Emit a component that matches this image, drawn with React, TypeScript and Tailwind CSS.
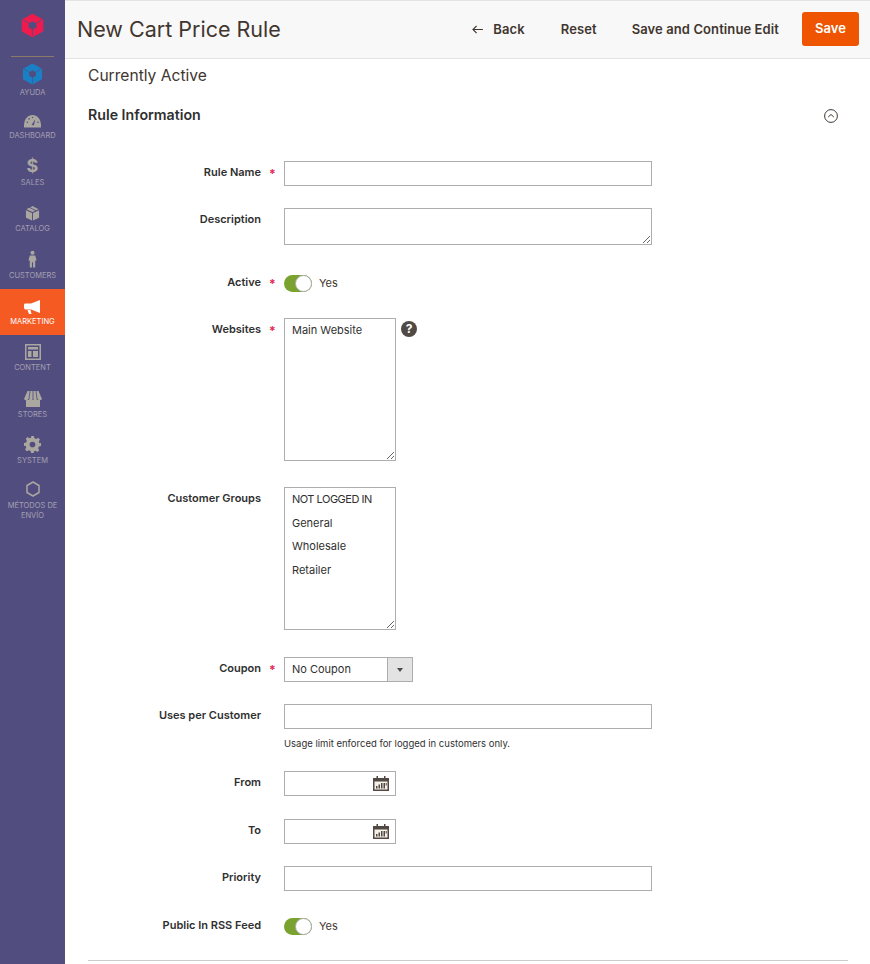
import React from 'react';

const Cube: React.FC<{ fill: string; hole: string; className?: string }> = ({ fill, hole, className }) => (
  <svg viewBox="0 0 24 26" className={className}>
    <path d="M12 2 L22 7.500 V18.500 L12 24 L2 18.500 V7.500 Z" fill={fill} stroke={fill} strokeWidth="2.500" strokeLinejoin="round" />
    <path d="M2 7 L12 13 L22 7 M12 13 V24" fill="none" stroke={hole} strokeWidth="0.8" />
    <path d="M12 8.500 L16 11 V15 L12 17.500 L8 15 V11 Z" fill={hole} />
  </svg>
);

const Gauge = () => (
  <svg viewBox="0 0 20 15" className="w-[17px] h-[14px]" fill="#aaa6a0">
    <path d="M0 15 C-0.5 6 4 0.5 10 0.5 C16 0.5 20.500 6 20 15 Z" />
    <path d="M9 12 L13.500 5 L11.500 12.800 Z" fill="#524d7f" />
    <circle cx="4" cy="9" r="0.9" fill="#524d7f" />
    <circle cx="6" cy="5" r="0.9" fill="#524d7f" />
    <circle cx="10" cy="3.500" r="0.9" fill="#524d7f" />
    <circle cx="16.500" cy="9" r="0.9" fill="#524d7f" />
  </svg>
);

const Box = () => (
  <svg viewBox="0 0 16 16" className="w-[15px] h-[16px]" fill="#aaa6a0">
    <path d="M1 5 L7.500 8 V16 L1 13 Z" />
    <path d="M15 5 L8.500 8 V16 L15 13 Z" />
    <path d="M8 7 L1.500 4 L4.500 2.500 L11 5.500 Z" />
    <path d="M12 5 L5.500 2 L8 0.500 L14.500 4 Z" />
  </svg>
);

const Person = () => (
  <svg viewBox="0 0 10 19" className="w-[9px] h-[18px]" fill="#aaa6a0">
    <circle cx="5" cy="2.500" r="2.300" />
    <path d="M2 5.500 H8 L9.500 11 L8 11.500 V19 H5.600 V13 H4.400 V19 H2 V11.500 L0.500 11 Z" />
  </svg>
);

const Megaphone = () => (
  <svg viewBox="0 0 17 14" className="w-[17px] h-[14px]" fill="#ffffff">
    <path d="M16 0 V13 L7 9.500 H1.500 C0.500 9.500 0 8.500 0 7 V5.500 C0 4 0.500 3.500 1.500 3.500 H7 Z" />
    <path d="M3.500 10 H6.500 L7.500 14 H5 Z" />
  </svg>
);

const Content = () => (
  <svg viewBox="0 0 16 16" className="w-[16px] h-[16px]" fill="#aaa6a0">
    <path fillRule="evenodd" d="M0 0 H16 V16 H0 Z M1.500 1.500 V14.500 H14.500 V1.500 Z" />
    <path d="M3 3 H13 V5.500 H3 Z M3 7 H6.500 V13 H3 Z M8 7 H13 V13 H8 Z" />
  </svg>
);

const Store = () => (
  <svg viewBox="0 0 18 16" className="w-[18px] h-[16px]" fill="#aaa6a0">
    <path d="M3.500 0 H14.500 L18 8 H0 Z" />
    <path d="M2 9 H16 V16 H2 Z" />
    <path d="M6 0 L5 8 M9 0 V8 M12 0 L13 8" stroke="#524d7f" strokeWidth="0.8" />
    <path d="M0 8 Q2 10.500 4.500 8 Q7 10.500 9 8 Q11 10.500 13.500 8 Q16 10.500 18 8" fill="#aaa6a0" />
  </svg>
);

const Gear = () => (
  <svg viewBox="0 0 24 24" className="w-[17px] h-[17px]">
    <path
      fill="#aaa6a0"
      d="M10 0 H14 L14.700 3.200 L17.200 4.200 L20 2.500 L22.500 5 L20.800 7.800 L21.800 10.300 L24 10 V14 L21 14.700 L20 17.200 L21.500 20 L19 22.500 L16.200 20.800 L13.700 21.800 L14 24 H10 L9.300 21 L6.800 20 L4 21.500 L1.500 19 L3.200 16.200 L2.200 13.700 L0 14 V10 L3 9.300 L4 6.800 L2.500 4 L5 1.500 L7.800 3.200 L10.300 2.200 Z"
    />
    <circle cx="12" cy="12" r="4" fill="#524d7f" />
  </svg>
);

const Hexagon = () => (
  <svg viewBox="0 0 14 16" className="w-[14px] h-[16px]" fill="none" stroke="#aaa6a0" strokeWidth="1.500" strokeLinejoin="round">
    <path d="M7 1 L13 4.500 V11.500 L7 15 L1 11.500 V4.500 Z" />
  </svg>
);

const Calendar = () => (
  <svg viewBox="0 0 16 15" className="w-[16px] h-[15px]">
    <path d="M0 2 H16 V15 H0 Z" fill="#514943" />
    <path d="M1.500 5.500 H14.500 V13.500 H1.500 Z" fill="#f4f1e8" />
    <path d="M3.500 0 H5 V3.500 H3.500 Z M11 0 H12.500 V3.500 H11 Z" fill="#514943" />
    <path d="M3 10 H4.500 V12.500 H3 Z M5.500 8.500 H7 V12.500 H5.500 Z M8 7 H9.500 V12.500 H8 Z M10.500 7 H12 V12.500 H10.500 Z M12.700 7 H13.700 V9.500 H12.700 Z" fill="#514943" />
  </svg>
);

const NavItem: React.FC<{ label: React.ReactNode; icon: React.ReactNode; active?: boolean; labelClass?: string }> = ({ label, icon, active, labelClass = '' }) => (
  <div className={`flex flex-col items-center h-[46.4px] shrink-0 ${active ? 'bg-[#f65a23] text-white' : 'text-[#a3a0b2]'}`}>
    <div className="h-[28px] flex items-end justify-center pb-[3px]">{icon}</div>
    <div className={`text-[7.5px] leading-[10px] uppercase text-center ${labelClass}`}>{label}</div>
  </div>
);

const Row: React.FC<{ label: string; required?: boolean; className?: string; labelClass?: string; children: React.ReactNode }> = ({
  label,
  required,
  className = '',
  labelClass = 'pt-[4px]',
  children,
}) => (
  <div className={`flex ${className}`}>
    <div className={`w-[173px] shrink-0 text-right text-[11px] leading-[14px] font-semibold text-[#303030] ${labelClass}`}>{label}</div>
    <div className={`w-[23px] shrink-0 pl-[8px] mt-[2px] text-[12px] leading-[14px] font-bold text-[#e22650] ${labelClass}`}>{required ? '*' : ''}</div>
    {children}
  </div>
);

const Toggle = () => (
  <div className="flex items-center gap-[7px]">
    <div className="w-[28px] h-[17px] rounded-full bg-[#79a22e] relative">
      <div className="absolute right-0 top-0 w-[17px] h-[17px] rounded-full bg-white border border-[#adadad]" />
    </div>
    <span className="text-[11px] text-[#41362f]">Yes</span>
  </div>
);

const inputClass = 'h-[25px] border border-[#adadad] bg-white block';

const ListBox: React.FC<{ items: string[] }> = ({ items }) => (
  <div className="w-[112px] h-[143px] border border-[#adadad] bg-white pl-[7px] pt-[1px] resize overflow-auto text-[11px] text-[#303030]">
    {items.map((item) => (
      <div key={item} className={`h-[23.6px] leading-[21px] ${item === 'NOT LOGGED IN' ? 'tracking-[-0.5px]' : ''}`}>{item}</div>
    ))}
  </div>
);

const DateInput = () => (
  <div className={`${inputClass} w-[112px] flex items-center justify-end pr-[6px]`}>
    <Calendar />
  </div>
);

export default function App() {
  return (
    <div className="flex w-[870px] h-[964px] overflow-hidden bg-white" style={{ fontFamily: 'Inter, "Open Sans", sans-serif' }}>
      <aside className="w-[65px] shrink-0 bg-[#524d7f] flex flex-col">
        <div className="h-[56px] flex justify-center pt-[13px] shrink-0">
          <Cube className="w-[23px] h-[25px]" fill="#ee1c4e" hole="#524d7f" />
        </div>
        <div className="mx-[11px] h-px bg-[#8a7a68] shrink-0" />
        <div className="h-[46.400px] shrink-0 flex flex-col items-center pt-[6px]">
          <Cube className="w-[21px] h-[22px]" fill="#1a80c6" hole="#524d7f" />
          <div className="text-[7.5px] leading-[10px] uppercase text-[#a3a0b2] mt-[3px]">Ayuda</div>
        </div>
        <NavItem label="Dashboard" icon={<Gauge />} />
        <NavItem label="Sales" icon={<span className="text-[18px] leading-[18px] font-bold text-[#aaa6a0]">$</span>} />
        <NavItem label="Catalog" icon={<Box />} />
        <NavItem label="Customers" icon={<Person />} />
        <NavItem label="Marketing" icon={<Megaphone />} active />
        <NavItem label="Content" icon={<Content />} />
        <NavItem label="Stores" icon={<Store />} />
        <NavItem label="System" icon={<Gear />} />
        <NavItem label={<>Métodos de<br />Envío</>} icon={<Hexagon />} labelClass="mt-[1px]" />
      </aside>

      <main className="flex-1 min-w-0">
        <header className="h-[59px] bg-[#f8f8f8] border-t border-b border-[#e3e3e3] flex items-center pl-[12px] pr-[11px]">
          <h1 className="text-[21.5px] font-normal text-[#41362f]">New Cart Price Rule</h1>
          <div className="ml-auto flex items-center text-[13px] tracking-[0.1px] font-semibold text-[#41362f]">
            <svg viewBox="0 0 12 10" className="w-[11px] h-[9px]" fill="none" stroke="#41362f" strokeWidth="1.300">
              <path d="M12 5 H1 M5 1 L1 5 L5 9" />
            </svg>
            <span className="ml-[10px]">Back</span>
            <span className="ml-[36px]">Reset</span>
            <span className="ml-[35px]">Save and Continue Edit</span>
            <button className="ml-[23px] mb-[1px] w-[57px] h-[34px] rounded-[3px] bg-[#ef5500] text-white font-semibold">Save</button>
          </div>
        </header>

        <div className="pl-[23px] pr-[22px]">
          <div className="mt-[6px] text-[15.6px] leading-[22px] text-[#41362f]">Currently Active</div>
          <div className="mt-[17px] flex items-center justify-between pr-[10px]">
            <h2 className="text-[14.200px] leading-[22px] font-semibold text-[#303030]">Rule Information</h2>
            <svg viewBox="0 0 14 14" className="w-[14px] h-[14px] translate-y-px" fill="none" stroke="#41362f" strokeWidth="1">
              <circle cx="7" cy="7" r="6.400" />
              <path d="M4.200 8 L7 5.500 L9.800 8" />
            </svg>
          </div>

          <div className="mt-[35px]">
            <Row label="Rule Name" required>
              <div className={`${inputClass} w-[368px]`} />
            </Row>
            <Row label="Description" className="mt-[22px]">
              <textarea className="w-[368px] h-[37px] border border-[#adadad] bg-white block" />
            </Row>
            <Row label="Active" required className="mt-[30px]" labelClass="pt-0">
              <Toggle />
            </Row>
            <Row label="Websites" required className="mt-[26px]">
              <ListBox items={['Main Website']} />
              <div className="ml-[5px] mt-[3px] w-[16px] h-[16px] rounded-full bg-[#514943] text-white text-[12px] leading-[16px] font-bold text-center">?</div>
            </Row>
            <Row label="Customer Groups" className="mt-[26px]">
              <ListBox items={['NOT LOGGED IN', 'General', 'Wholesale', 'Retailer']} />
            </Row>
            <Row label="Coupon" required className="mt-[27px]">
              <div className={`${inputClass} w-[129px] flex text-[11px] text-[#303030]`}>
                <span className="flex-1 pl-[7px] leading-[23px]">No Coupon</span>
                <span className="w-[25px] bg-[#e3e3e3] border-l border-[#adadad] flex items-center justify-center">
                  <span className="w-0 h-0 border-l-[3.500px] border-r-[3.500px] border-t-[4px] border-l-transparent border-r-transparent border-t-[#514943]" />
                </span>
              </div>
            </Row>
            <Row label="Uses per Customer" className="mt-[22px]">
              <div>
                <div className={`${inputClass} w-[368px]`} />
                <div className="mt-[8px] text-[9.5px] leading-[14px] text-[#303030]">Usage limit enforced for logged in customers only.</div>
              </div>
            </Row>
            <Row label="From" className="mt-[20px]">
              <DateInput />
            </Row>
            <Row label="To" className="mt-[23px]">
              <DateInput />
            </Row>
            <Row label="Priority" className="mt-[22px]">
              <div className={`${inputClass} w-[368px]`} />
            </Row>
            <Row label="Public In RSS Feed" className="mt-[27px]" labelClass="pt-0">
              <Toggle />
            </Row>
          </div>

          <div className="mt-[25px] h-px bg-[#cccccc]" />
        </div>
      </main>
    </div>
  );
}
